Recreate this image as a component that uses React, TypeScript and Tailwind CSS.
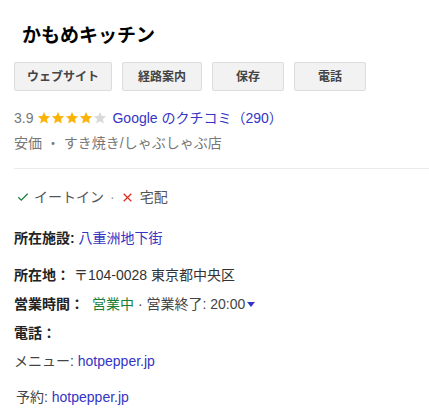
import React from 'react';

const FONT = '"Liberation Sans", Arial, "Noto Sans CJK JP", sans-serif';

const Star = ({ on }: { on: boolean }) => (
  <svg viewBox="0 0 24 24" className="h-[14px] w-[14px]" fill={on ? '#fbb30a' : '#d9d9d9'}>
    <path d="M12 1.5l3.1 7 7.4.6-5.6 4.9 1.7 7.3L12 17.4l-6.6 3.9 1.7-7.3L1.5 9.1l7.4-.6z" />
  </svg>
);

const buttons = [
  { label: 'ウェブサイト', w: 'w-[98px]' },
  { label: '経路案内', w: 'w-[80px]' },
  { label: '保存', w: 'w-[72px]' },
  { label: '電話', w: 'w-[72px]' },
];

export default function App() {
  return (
    <div className="h-[413px] w-[429px] overflow-hidden bg-white pl-[14px] text-[#222]" style={{ fontFamily: FONT }}>
      {/* Title */}
      <h2 className="pl-[8px] pt-[24px] text-[19px] font-bold leading-[24px] text-black">かもめキッチン</h2>

      {/* Actions */}
      <div className="mt-[14px] flex gap-[10px]">
        {buttons.map((b) => (
          <button
            key={b.label}
            className={`${b.w} h-[29px] rounded-[2px] border border-[#dcdcdc] bg-[#f2f2f2] text-[12px] font-bold text-[#444]`}
          >
            {b.label}
          </button>
        ))}
      </div>

      {/* Rating */}
      <div className="mt-[18px] flex items-center text-[14px] leading-[18px]">
        <span className="text-[#777]">3.9</span>
        <span className="ml-[4px] flex">
          {[0, 1, 2, 3, 4].map((i) => (
            <Star key={i} on={i < 4} />
          ))}
        </span>
        <a className="ml-[5px] text-[#3534c4]">Google のクチコミ（290）</a>
      </div>
      <div className="mt-[6px] text-[14px] leading-[20px] text-[#777]">安価 ・ すき焼き/しゃぶしゃぶ店</div>

      <div className="mt-[15px] border-t border-[#ebebeb]" />

      {/* Service options */}
      <div className="mt-[19px] flex items-center text-[14px] leading-[18px] text-[#555]">
        <svg viewBox="0 0 24 24" className="ml-[2px] h-[14px] w-[14px]" fill="none" stroke="#188038" strokeWidth="2.2">
          <path d="M4 12.5l5 5L20 6.5" />
        </svg>
        <span className="ml-[4px]">イートイン</span>
        <span className="mx-[6px] text-[#999]">·</span>
        <svg viewBox="0 0 24 24" className="h-[13px] w-[13px]" fill="none" stroke="#d93025" strokeWidth="2.4">
          <path d="M5 5l14 14M19 5L5 19" />
        </svg>
        <span className="ml-[6px]">宅配</span>
      </div>

      {/* Details */}
      <div className="mt-[23px] text-[14px] leading-[18px]">
        <span className="font-bold">所在施設: </span>
        <a className="text-[#3534c4]">八重洲地下街</a>
      </div>
      <div className="mt-[19px] text-[14px] leading-[18px]">
        <span className="font-bold">所在地： </span>
        <span className="text-[#333]">〒104-0028 東京都中央区</span>
      </div>
      <div className="mt-[11px] flex items-center text-[14px] leading-[18px]">
        <span className="font-bold">営業時間：</span>
        <span className="ml-[8px] text-[#188038]">営業中</span>
        <span className="text-[#444]">&nbsp;· 営業終了: 20:00</span>
        <svg viewBox="0 0 10 6" className="ml-[2px] h-[5px] w-[8px]" fill="#3534c4">
          <path d="M0 0h10L5 6z" />
        </svg>
      </div>
      <div className="mt-[11px] text-[14px] leading-[18px]">
        <span className="font-bold">電話： </span>
      </div>
      <div className="mt-[10px] text-[14px] leading-[18px] text-[#444]">
        メニュー: <a className="text-[#3534c4]">hotpepper.jp</a>
      </div>
      <div className="mt-[18px] pl-[2px] text-[14px] leading-[18px] text-[#444]">
        予約: <a className="text-[#3534c4]">hotpepper.jp</a>
      </div>
    </div>
  );
}
